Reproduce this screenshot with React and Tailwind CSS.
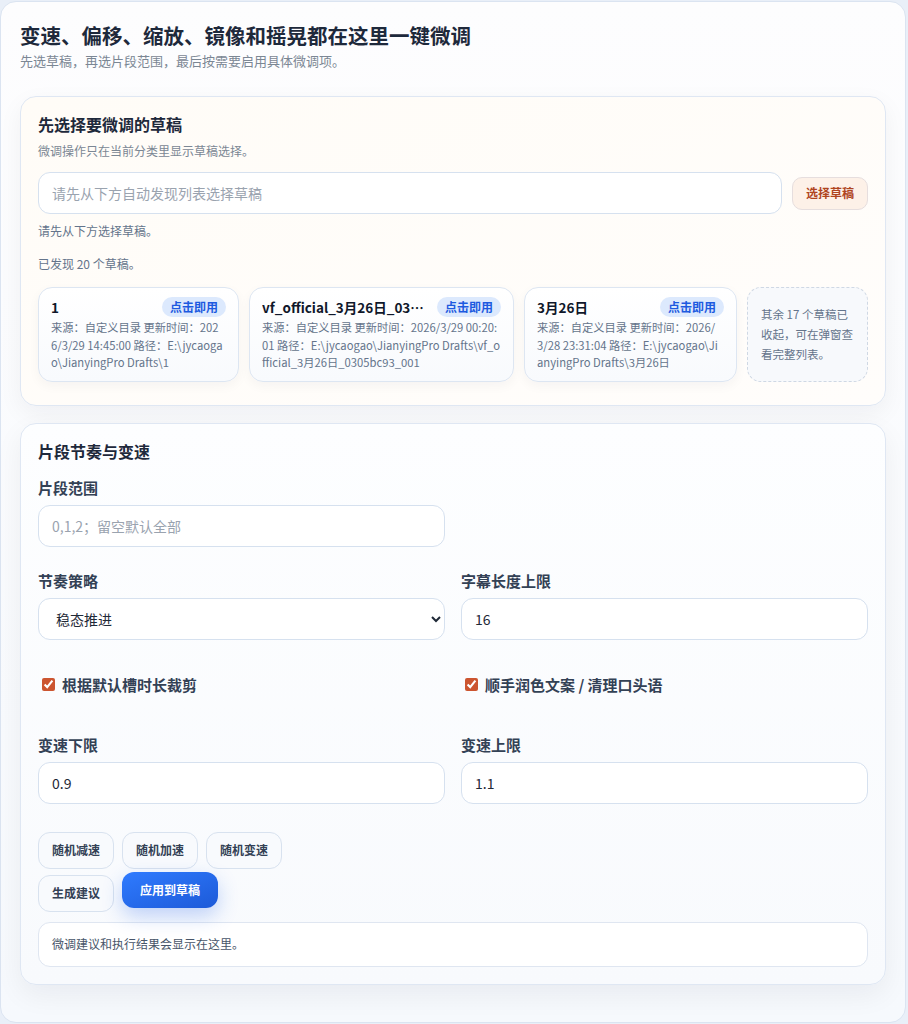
import React from "react";

const FONT = { fontFamily: '"Noto Sans CJK SC", "Noto Sans", sans-serif' };

function DraftCard({ title, desc }) {
  return (
    <div className="flex flex-col rounded-[14px] border border-[#dde6f2] bg-gradient-to-b from-white to-[#f8fafd] px-[12px] pt-[9px] pb-[9px] shadow-[0_4px_12px_rgba(15,23,42,0.04)] min-w-0">
      <div className="flex items-center justify-between gap-[8px]">
        <div className="truncate text-[13.5px] font-bold leading-[20px] text-[#0f172a]">{title}</div>
        <span className="shrink-0 rounded-full bg-[#dce9fd] px-[8px] text-[12px] font-bold leading-[20px] text-[#1d5ae0]">点击即用</span>
      </div>
      <div className="mt-[2px] break-all text-[11.25px] leading-[17.5px] text-[#64748b]">{desc}</div>
    </div>
  );
}

function Label({ children }) {
  return <div className="text-[15px] font-bold leading-[20px] text-[#334155]">{children}</div>;
}

const inputCls =
  "h-[42px] w-full rounded-[12px] border border-[#d6e1ef] bg-white px-[13px] text-[14px] text-[#1f2937] outline-none placeholder:text-[#9aa3af]";

function GhostBtn({ children }) {
  return (
    <button className="h-[37px] rounded-[12px] border border-[#d8e2ef] bg-[#f8fafd] px-[13px] text-[12px] font-bold text-[#334155]">
      {children}
    </button>
  );
}

export default function App() {
  return (
    <div style={FONT} className="min-h-screen bg-[#e9eff8] pt-[1px] pr-[2px]">
      <div className="rounded-[16px] border border-[#dbe4f1] bg-gradient-to-b from-[#fdfdfe] to-[#f6f9fd] px-[19px] pt-[18px] pb-[37px]">
        <h1 className="text-[20.5px] font-bold leading-[30px] text-[#1e293b]">变速、偏移、缩放、镜像和摇晃都在这里一键微调</h1>
        <p className="mt-[1px] text-[13px] leading-[20px] text-[#7b8794]">先选草稿，再选片段范围，最后按需要启用具体微调项。</p>

        {/* Card 1 */}
        <section className="mt-[25px] rounded-[16px] border border-[#dfe7f3] bg-gradient-to-br from-[#fffcf7] to-[#fffdfb] px-[17px] pt-[16px] pb-[23px] shadow-[0_8px_24px_rgba(15,23,42,0.05)]">
          <h2 className="text-[16px] font-bold leading-[22px] text-[#1e293b]">先选择要微调的草稿</h2>
          <p className="mt-[7px] text-[12px] leading-[18px] text-[#7b8794]">微调操作只在当前分类里显示草稿选择。</p>
          <div className="mt-[12px] flex items-center gap-[10px]">
            <input className={inputCls + " flex-1"} placeholder="请先从下方自动发现列表选择草稿" />
            <button className="h-[33px] rounded-[10px] border border-[#e6dede] bg-[#fdf1e8] px-[13px] text-[12px] font-bold text-[#b0451f]">
              选择草稿
            </button>
          </div>
          <p className="mt-[8px] text-[12px] leading-[18px] text-[#64748b]">请先从下方选择草稿。</p>
          <p className="mt-[15px] text-[12px] leading-[18px] text-[#64748b]">已发现 20 个草稿。</p>
          <div className="mt-[14px] grid grid-cols-[201fr_265fr_213fr_121fr] gap-[10px]">
            <DraftCard title="1" desc="来源：自定义目录 更新时间：2026/3/29 14:45:00 路径：E:\jycaogao\JianyingPro Drafts\1" />
            <DraftCard
              title="vf_official_3月26日_0305bc93_001"
              desc="来源：自定义目录 更新时间：2026/3/29 00:20:01 路径：E:\jycaogao\JianyingPro Drafts\vf_official_3月26日_0305bc93_001"
            />
            <DraftCard title="3月26日" desc="来源：自定义目录 更新时间：2026/3/28 23:31:04 路径：E:\jycaogao\JianyingPro Drafts\3月26日" />
            <div className="flex items-center rounded-[14px] border border-dashed border-[#cfd8e4] bg-[#f7f9fc] px-[13px] text-[11.5px] leading-[20px] text-[#64748b]">
              其余 17 个草稿已收起，可在弹窗查看完整列表。
            </div>
          </div>
        </section>

        {/* Card 2 */}
        <section className="mt-[17px] rounded-[16px] border border-[#dfe7f3] bg-gradient-to-b from-[#fdfeff] to-[#f8fafd] px-[17px] pt-[16px] pb-[17px] shadow-[0_10px_28px_rgba(15,23,42,0.06)]">
          <h2 className="text-[16px] font-bold leading-[22px] text-[#1e293b]">片段节奏与变速</h2>

          <div className="mt-[16px] grid grid-cols-2 gap-x-[16px]">
            <div>
              <Label>片段范围</Label>
              <input className={inputCls + " mt-[7px]"} placeholder="0,1,2；留空默认全部" />
            </div>
          </div>

          <div className="mt-[24px] grid grid-cols-2 gap-x-[16px]">
            <div>
              <Label>节奏策略</Label>
              <select className={inputCls + " mt-[7px]"} defaultValue="steady">
                <option value="steady">稳态推进</option>
              </select>
            </div>
            <div>
              <Label>字幕长度上限</Label>
              <input className={inputCls + " mt-[7px]"} defaultValue="16" />
            </div>
          </div>

          <div className="mt-[35px] grid grid-cols-2 gap-x-[16px]">
            <label className="flex items-center gap-[7px] pl-[4px] text-[15px] font-bold leading-[20px] text-[#334155]">
              <input type="checkbox" defaultChecked className="h-[13px] w-[13px] accent-[#cc5530]" />
              根据默认槽时长裁剪
            </label>
            <label className="flex items-center gap-[7px] pl-[4px] text-[15px] font-bold leading-[20px] text-[#334155]">
              <input type="checkbox" defaultChecked className="h-[13px] w-[13px] accent-[#cc5530]" />
              顺手润色文案 / 清理口头语
            </label>
          </div>

          <div className="mt-[40px] grid grid-cols-2 gap-x-[16px]">
            <div>
              <Label>变速下限</Label>
              <input className={inputCls + " mt-[7px]"} defaultValue="0.9" />
            </div>
            <div>
              <Label>变速上限</Label>
              <input className={inputCls + " mt-[7px]"} defaultValue="1.1" />
            </div>
          </div>

          <div className="mt-[28px] flex flex-col gap-[6px]">
            <div className="flex gap-[8px]">
              <GhostBtn>随机减速</GhostBtn>
              <GhostBtn>随机加速</GhostBtn>
              <GhostBtn>随机变速</GhostBtn>
            </div>
            <div className="flex gap-[8px]">
              <GhostBtn>生成建议</GhostBtn>
              <button className="h-[36px] -translate-y-[3px] rounded-[12px] bg-gradient-to-br from-[#2f7bff] to-[#1d5ad8] px-[18px] text-[12px] font-bold text-white shadow-[0_8px_20px_rgba(37,99,235,0.28)]">
                应用到草稿
              </button>
            </div>
          </div>

          <div className="mt-[10px] flex h-[45px] items-center rounded-[12px] border border-[#dfe6f1] bg-white px-[13px] text-[12px] text-[#475569]">
            微调建议和执行结果会显示在这里。
          </div>
        </section>
      </div>
    </div>
  );
}
